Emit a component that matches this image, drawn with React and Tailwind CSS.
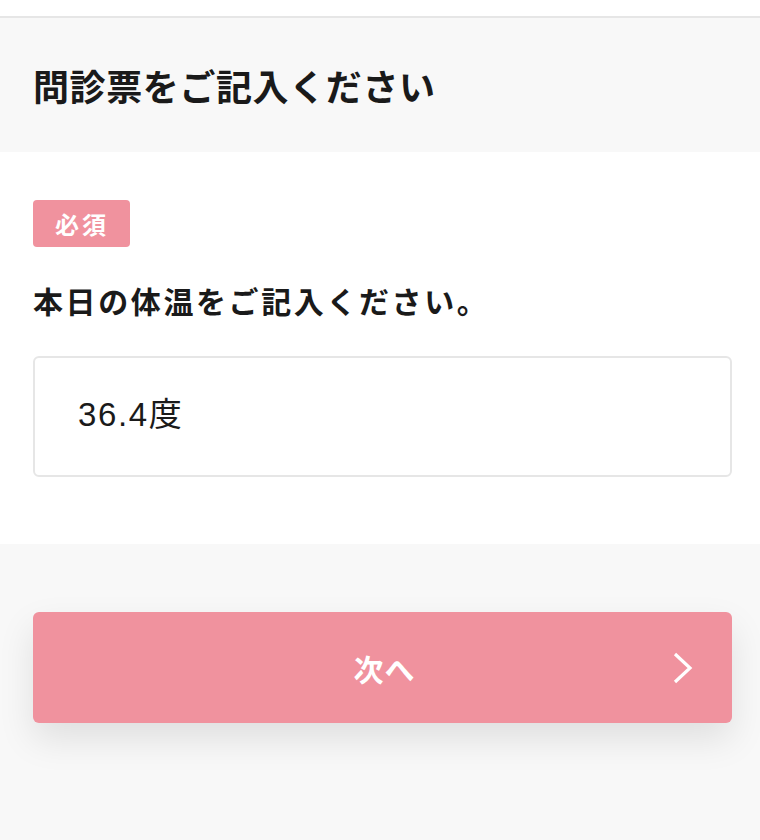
import React from "react";

export default function App() {
  return (
    <div
      className="w-[760px] h-[840px] bg-[#f8f8f8] text-[#1a1a1a] overflow-hidden"
      style={{ fontFamily: '"Noto Sans CJK JP", "Noto Sans", sans-serif' }}
    >
      <div className="h-[18px] bg-white border-b-2 border-[#e6e6e6]" />
      <div className="h-[134px] pl-[33px] pr-[28px] flex items-center">
        <h1 className="text-[36px] font-bold leading-none tracking-[0.6px]">問診票をご記入ください</h1>
      </div>
      <div className="bg-white h-[392px] pl-[33px] pr-[28px] pt-[48px]">
        <div className="inline-flex items-center h-[47px] pl-[22px] pr-[21px] rounded-[4px] bg-[#f0929e] text-white text-[24px] font-bold tracking-[3px] leading-none">
          必須
        </div>
        <div className="mt-[33px] h-[40px] flex items-center text-[30px] font-bold tracking-[2.6px] leading-none">
          本日の体温をご記入ください。
        </div>
        <div
          className="mt-[36px] h-[121px] border-2 border-[#e6e6e6] rounded-[6px] flex items-center px-[43px] pb-[4px] text-[33px] tracking-[1.6px] leading-none"
          style={{ fontFamily: '"Liberation Sans", "Noto Sans CJK JP", sans-serif' }}
        >
          36.4度
        </div>
      </div>
      <div className="pl-[33px] pr-[28px] pt-[68px]">
        <button className="relative w-full h-[111px] rounded-[6px] bg-[#f0929e] text-white flex items-center justify-center shadow-[0_16px_36px_rgba(0,0,0,0.10)]">
          <span className="text-[30px] font-bold leading-none tracking-[1px] pl-[4px]">次へ</span>
          <svg
            className="absolute right-[38px] top-1/2 -translate-y-1/2"
            width="22"
            height="32"
            viewBox="0 0 22 32"
            fill="none"
          >
            <path d="M3 2 L18 16 L3 30" stroke="white" strokeWidth="3.2" strokeLinecap="butt" strokeLinejoin="miter" />
          </svg>
        </button>
      </div>
    </div>
  );
}
